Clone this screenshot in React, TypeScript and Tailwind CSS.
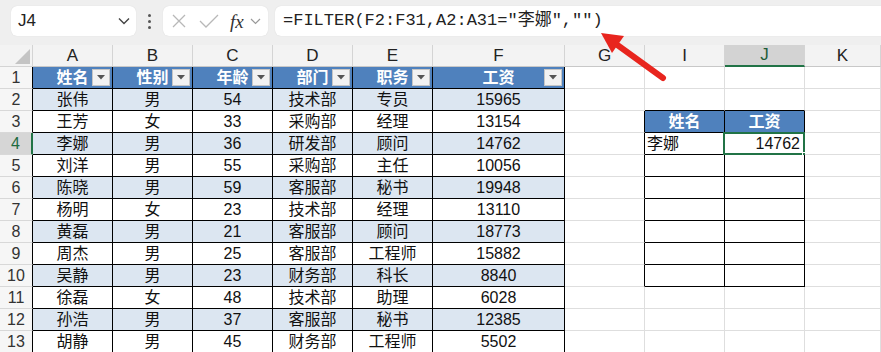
import React from "react";

const FONT = { fontFamily: '"Liberation Sans", "Noto Sans CJK SC", sans-serif' };

const colLetters = ["", "A", "B", "C", "D", "E", "F", "G", "I", "J", "K"];

const header = ["姓名", "性别", "年龄", "部门", "职务", "工资"];
const rows: string[][] = [
  ["张伟", "男", "54", "技术部", "专员", "15965"],
  ["王芳", "女", "33", "采购部", "经理", "13154"],
  ["李娜", "男", "36", "研发部", "顾问", "14762"],
  ["刘洋", "男", "55", "采购部", "主任", "10056"],
  ["陈晓", "男", "59", "客服部", "秘书", "19948"],
  ["杨明", "女", "23", "技术部", "经理", "13110"],
  ["黄磊", "男", "21", "客服部", "顾问", "18773"],
  ["周杰", "男", "25", "客服部", "工程师", "15882"],
  ["吴静", "男", "23", "财务部", "科长", "8840"],
  ["徐磊", "女", "48", "技术部", "助理", "6028"],
  ["孙浩", "男", "37", "客服部", "秘书", "12385"],
  ["胡静", "男", "45", "财务部", "工程师", "5502"],
];

/* ─── Formula bar ─────────────────────────────────── */
function TopBar() {
  return (
    <div className="h-[45px] bg-[#efefef] flex items-start pt-[6px] pl-[11px] gap-0">
      <div className="w-[125px] h-[30px] bg-white rounded-[6px] flex items-center pl-[7px] pr-[6px] shadow-[0_0_1px_rgba(0,0,0,0.15)]">
        <span className="text-[17px] text-[#222] flex-1">J4</span>
        <svg width="12" height="8" viewBox="0 0 12 8"><path d="M1 1.5 L6 6.5 L11 1.5" fill="none" stroke="#444" strokeWidth="1.4" /></svg>
      </div>
      <div className="w-[27px] h-[30px] flex flex-col items-center justify-center gap-[3px]">
        <div className="w-[3px] h-[3px] rounded-full bg-[#555]" />
        <div className="w-[3px] h-[3px] rounded-full bg-[#555]" />
        <div className="w-[3px] h-[3px] rounded-full bg-[#555]" />
      </div>
      <div className="w-[105px] h-[30px] bg-white rounded-[6px] flex items-center pl-[8px] shadow-[0_0_1px_rgba(0,0,0,0.15)]">
        <svg width="16" height="16" viewBox="0 0 16 16"><path d="M2 2 L14 14 M14 2 L2 14" stroke="#b8b8b8" strokeWidth="1.3" /></svg>
        <svg className="ml-[12px]" width="20" height="16" viewBox="0 0 20 16"><path d="M1 8 L7 14 L19 2" fill="none" stroke="#b8b8b8" strokeWidth="1.3" /></svg>
        <span className="ml-[11px] text-[19px] italic text-[#333] leading-none" style={{ fontFamily: '"Liberation Serif", serif' }}>fx</span>
        <svg className="ml-[6px]" width="11" height="7" viewBox="0 0 11 7"><path d="M1 1 L5.5 5.5 L10 1" fill="none" stroke="#999" strokeWidth="1.2" /></svg>
      </div>
      <div className="ml-[7px] flex-1 h-[30px] bg-white rounded-l-[6px] flex items-center pl-[8px] shadow-[0_0_1px_rgba(0,0,0,0.15)]">
        <span className="text-[17px] text-[#222] whitespace-pre" style={{ fontFamily: '"Liberation Mono", "Noto Sans CJK SC", monospace' }}>
          =FILTER(F2:F31,A2:A31="李娜","")
        </span>
      </div>
    </div>
  );
}

function Dropdown() {
  return (
    <div className="absolute right-[2px] top-[2px] w-[18px] h-[17px] bg-[#f2f2f2] border border-[#c6c6c6] flex items-center justify-center">
      <svg width="8" height="5" viewBox="0 0 8 5"><path d="M0 0 L8 0 L4 4.5 Z" fill="#555" /></svg>
    </div>
  );
}

/* ─── Sheet ───────────────────────────────────────── */
function inMain(r: number, c: number) {
  return r >= 1 && r <= 13 && c >= 1 && c <= 6;
}
function inSide(r: number, c: number) {
  return r >= 3 && r <= 10 && (c === 8 || c === 9);
}

function Cell({ r, c }: { r: number; c: number }) {
  const main = inMain(r, c);
  const side = inSide(r, c);
  const rightBlack = main || side || (c === 7 && r >= 3 && r <= 10);
  const bottomBlack = main || side || (r === 2 && (c === 8 || c === 9));

  let bg = "bg-white";
  let text = "";
  let cls = "justify-center text-[#111]";
  let dd = false;

  if (main) {
    if (r === 1) {
      bg = "bg-[#4f81bd]";
      text = header[c - 1];
      cls = "justify-center text-white font-bold";
      dd = true;
    } else {
      bg = r % 2 === 0 ? "bg-[#dce6f1]" : "bg-white";
      text = rows[r - 2][c - 1];
    }
  } else if (side && r === 3) {
    bg = "bg-[#4f81bd]";
    text = c === 8 ? "姓名" : "工资";
    cls = "justify-center text-white font-bold";
  } else if (r === 4 && c === 8) {
    text = "李娜";
    cls = "justify-start pl-[2px] text-[#111]";
  } else if (r === 4 && c === 9) {
    text = "14762";
    cls = "justify-end pr-[4px] text-[#111]";
  }

  return (
    <div
      className={`relative h-[22px] flex items-center border-r border-b text-[16px] ${bg} ${cls} ${rightBlack ? "border-r-black" : "border-r-[#dedede]"} ${bottomBlack ? "border-b-black" : "border-b-[#dedede]"}`}
    >
      <span className="whitespace-nowrap">{text}</span>
      {dd && <Dropdown />}
      {r === 4 && c === 9 && (
        <>
          <div className="absolute -left-[2px] -top-[1px] -right-[1px] -bottom-[1px] border-2 border-[#217346] pointer-events-none" />
          <div className="absolute -right-[4px] -bottom-[4px] w-[6px] h-[6px] bg-[#217346] border border-white" />
        </>
      )}
    </div>
  );
}

function RowHead({ r }: { r: number }) {
  const active = r === 4;
  return (
    <div
      className={`h-[22px] flex items-center justify-center border-b border-b-[#d8d8d8] text-[16px] ${active ? "bg-[#d6d6d6] text-[#1e6b3f] border-r-2 border-r-[#217346]" : "bg-[#f6f6f6] text-[#333] border-r border-r-black"}`}
    >
      {r}
    </div>
  );
}

function ColHead({ i }: { i: number }) {
  if (i === 0) {
    return (
      <div className="h-[22px] bg-[#f3f3f3] border-r border-b border-[#d4d4d4] flex items-end justify-end pr-[2px] pb-[2px]">
        <svg width="15" height="15" viewBox="0 0 15 15"><path d="M15 0 L15 15 L0 15 Z" fill="#c4c4c4" /></svg>
      </div>
    );
  }
  const active = colLetters[i] === "J";
  return (
    <div
      className={`h-[22px] flex items-center justify-center text-[17px] border-r border-r-[#d4d4d4] ${active ? "bg-[#d3d3d3] text-[#1e5c38] border-b-2 border-b-[#217346]" : "bg-[#f3f3f3] text-[#222] border-b border-b-[#c8c8c8]"}`}
    >
      {colLetters[i]}
    </div>
  );
}

export default function App() {
  const cols = Array.from({ length: 11 }, (_, i) => i);
  const rs = Array.from({ length: 13 }, (_, i) => i + 1);
  return (
    <div className="relative w-[881px] h-[352px] overflow-hidden bg-white" style={FONT}>
      <TopBar />
      <div className="grid grid-cols-[33px_80px_80px_80px_80px_80px_132px_80px_80px_80px_1fr]">
        {cols.map((i) => <ColHead key={`h${i}`} i={i} />)}
        {rs.map((r) =>
          cols.map((c) => (c === 0 ? <RowHead key={`${r}-0`} r={r} /> : <Cell key={`${r}-${c}`} r={r} c={c} />))
        )}
      </div>
      {/* red arrow */}
      <svg className="absolute left-0 top-0 pointer-events-none" width="881" height="352" viewBox="0 0 881 352">
        <line x1="663" y1="78" x2="616" y2="44" stroke="#e8251e" strokeWidth="6" strokeLinecap="round" />
        <path d="M601 33 L624 36 L612 53 Z" fill="#e8251e" />
      </svg>
    </div>
  );
}
